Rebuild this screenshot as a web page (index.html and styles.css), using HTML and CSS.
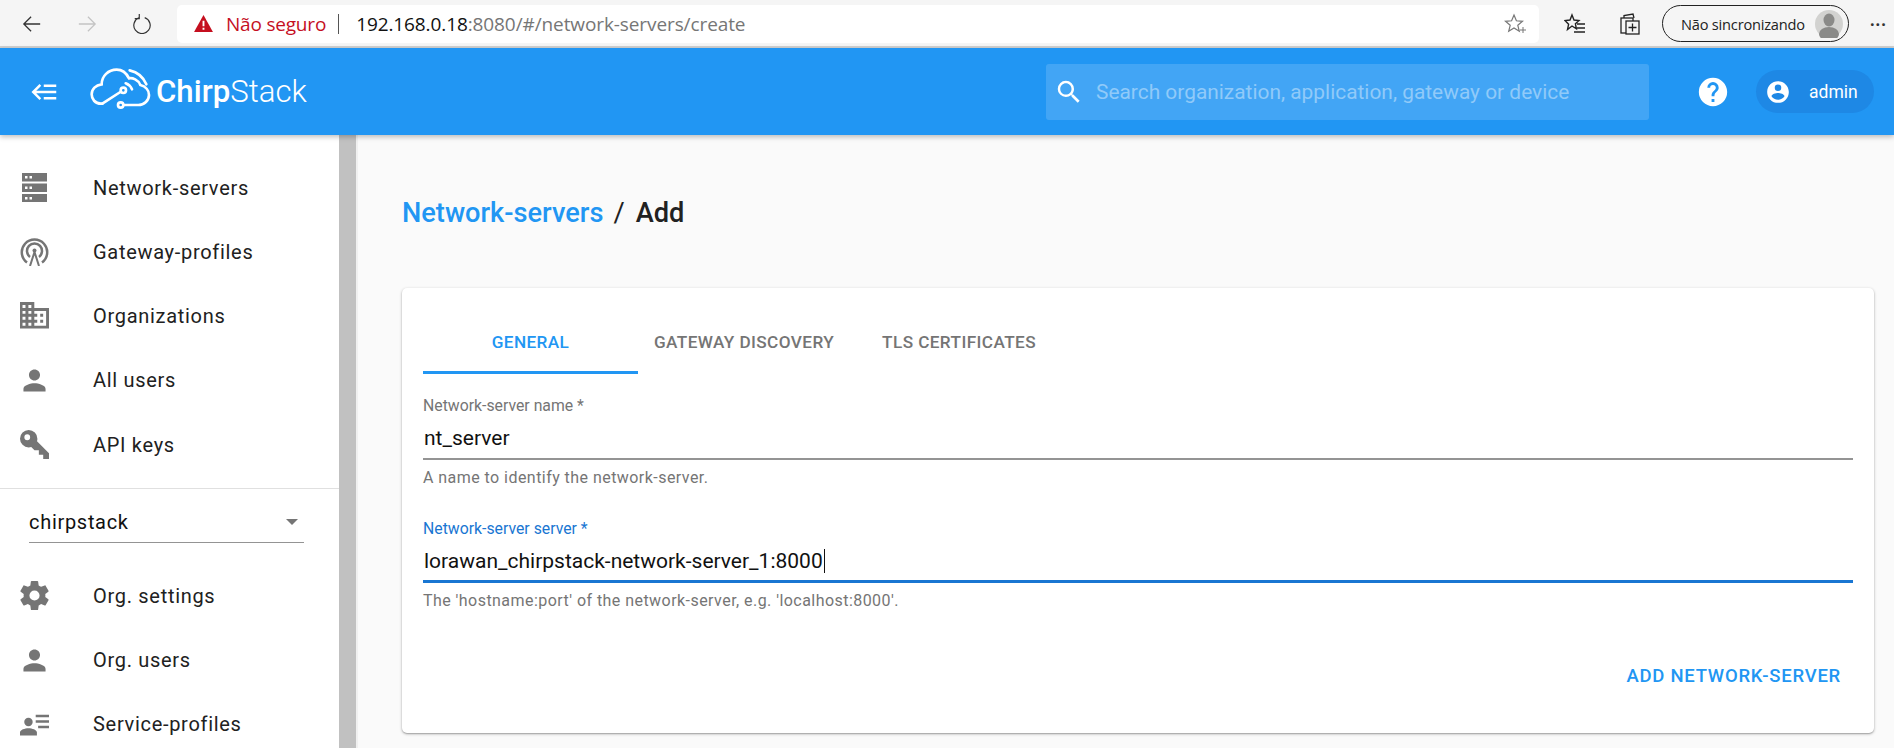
FILE: index.html
```html
<!DOCTYPE html>
<html>
  <head>
    <meta charset="utf-8">
    <title>ChirpStack</title>
    <link rel="stylesheet" href="styles.css">
  </head>
  <body>
    <div class="browser-bar">
      <div class="nav-btns">
        <svg class="nav-icon" viewBox="0 0 22 22"><path d="M20 11H2M10 3l-8 8 8 8" fill="none" stroke="#333" stroke-width="1.4"/></svg>
        <svg class="nav-icon" viewBox="0 0 22 22"><path d="M2 11h18M12 3l8 8-8 8" fill="none" stroke="#c4c4c4" stroke-width="1.4"/></svg>
        <svg class="nav-icon" viewBox="0 0 22 22"><path d="M8 4a9 9 0 1 0 6 0M8 0v5H3" fill="none" stroke="#333" stroke-width="1.3"/></svg>
      </div>
      <div class="address">
        <svg class="warn" viewBox="0 0 20 18"><path d="M10 0l10 18H0z" fill="#c50f1f"/><path d="M9 6h2v6H9zM9 13.5h2v2H9z" fill="#fff"/></svg>
        <span class="not-secure">Não seguro</span>
        <span class="addr-sep"></span>
        <span class="url"><b>192.168.0.18</b>:8080/#/network-servers/create</span>
        <svg class="addr-star" viewBox="0 0 22 22"><path d="M10 2l2.4 5.8 6.1.5-4.7 4 1.5 6L10 15l-5.3 3.3 1.5-6-4.7-4 6.1-.5z" fill="none" stroke="#777" stroke-width="1.2"/><path d="M16 17h6M19 14v6" stroke="#777" stroke-width="1"/></svg>
      </div>
      <svg class="tool-icon first" viewBox="0 0 22 22"><path d="M8 2l2 5 5 .5-3.6 3.300 1 5L8 13l-4.500 3.500 1.100-5.200L1 7.500 6 7z" fill="none" stroke="#222" stroke-width="1.400"/><path d="M13 11h8M13 15h8M10 19h11" stroke="#222" stroke-width="1.500"/></svg>
      <svg class="tool-icon" viewBox="0 0 22 22"><path d="M5 5V2.500L14 1l1 4" fill="none" stroke="#222" stroke-width="1.300"/><rect x="2" y="5" width="12" height="15" fill="none" stroke="#222" stroke-width="1.300"/><rect x="7" y="8" width="13" height="13" fill="#f5f5f5" stroke="#222" stroke-width="1.300"/><path d="M13.500 10.500v8M9.500 14.500h8" stroke="#222" stroke-width="1.300"/></svg>
      <div class="sync-pill">
        <span>Não sincronizando</span>
        <svg class="sync-avatar" viewBox="0 0 28 28"><circle cx="14" cy="14" r="14" fill="#d2d2d0"/><ellipse cx="14" cy="10" rx="5.500" ry="6.500" fill="#8a8a88"/><ellipse cx="14" cy="24" rx="10" ry="7" fill="#8a8a88"/></svg>
      </div>
      <span class="more">···</span>
    </div>

    <header class="topbar">
      <svg class="burger" viewBox="0 0 24 24"><path d="M5,13L9,17L7.6,18.42L1.18,12L7.6,5.58L9,7L5,11H21V13H5M21,6V8H11V6H21M21,16V18H11V16H21Z"/></svg>
      <div class="logo">
        <svg class="logo-mark" viewBox="0 0 210 165" fill="none" stroke="#fff" stroke-width="8" stroke-linecap="round">
          <path d="M52 128H48C30 128 20 114 20 100C20 84 32 72 50 70C50 45 70 26 95 26C112 26 124 36 132 52C142 50 160 56 166 72C182 76 192 88 192 102C192 118 178 132 160 132H118"/>
          <path d="M52 128L106 93"/>
          <circle cx="115" cy="88" r="8"/>
          <circle cx="107" cy="132" r="8"/>
          <path d="M122 67C130 70 137 76 141 85"/>
          <path d="M134 28C156 33 175 48 184 70"/>
        </svg>
        <span class="logo-text"><b>Chirp</b>Stack</span>
      </div>
      <div class="search">
        <svg class="search-icon" viewBox="0 0 24 24"><path d="M9.5,3A6.5,6.5 0 0,1 16,9.5C16,11.11 15.41,12.59 14.44,13.73L14.71,14H15.5L20.5,19L19,20.5L14,15.5V14.71L13.73,14.44C12.59,15.41 11.11,16 9.5,16A6.5,6.5 0 0,1 3,9.5A6.5,6.5 0 0,1 9.5,3M9.5,5C7,5 5,7 5,9.5C5,12 7,14 9.5,14C12,14 14,12 14,9.5C14,7 12,5 9.5,5Z"/></svg>
        <span>Search organization, application, gateway or device</span>
      </div>
      <svg class="help" viewBox="0 0 24 24"><path d="M15.07,11.25L14.17,12.17C13.45,12.89 13,13.5 13,15H11V14.5C11,13.39 11.45,12.39 12.17,11.67L13.41,10.41C13.78,10.05 14,9.55 14,9C14,7.89 13.1,7 12,7A2,2 0 0,0 10,9H8A4,4 0 0,1 12,5A4,4 0 0,1 16,9C16,9.88 15.64,10.67 15.07,11.25M13,19H11V17H13M12,2A10,10 0 0,0 2,12A10,10 0 0,0 12,22A10,10 0 0,0 22,12C22,6.47 17.5,2 12,2Z"/></svg>
      <div class="user">
        <svg class="user-icon" viewBox="0 0 24 24"><path d="M12,19.2C9.5,19.2 7.29,17.92 6,16C6.03,14 10,12.9 12,12.9C14,12.9 17.97,14 18,16C16.71,17.92 14.5,19.2 12,19.2M12,5A3,3 0 0,1 15,8A3,3 0 0,1 12,11A3,3 0 0,1 9,8A3,3 0 0,1 12,5M12,2A10,10 0 0,0 2,12A10,10 0 0,0 12,22A10,10 0 0,0 22,12C22,6.47 17.5,2 12,2Z"/></svg>
        <span>admin</span>
      </div>
    </header>

    <div class="layout">
      <nav class="sidebar">
        <a class="nav-item"><svg viewBox="0 0 29 29"><path fill-rule="evenodd" d="M2 0h25v8.500H2zM5 3v2.500h2.500V3zM9.500 3v2.500H12V3zM2 10.500h25V19H2zM5 13.500V16h2.500v-2.500zM9.500 13.500V16H12v-2.500zM2 21h25v8.500H2zM5 24v2.500h2.500V24zM9.500 24v2.500H12V24z"/></svg><span>Network-servers</span></a>
        <a class="nav-item"><svg class="gateway-icon" viewBox="0 0 29 29"><path d="M7 25.500A12.700 12.700 0 1 1 22 25.500M10 20A7.500 7.500 0 1 1 19 20"/><path d="M10 29l4.500-14 4.500 14" stroke-width="2"/><circle cx="14.500" cy="13.500" r="2" class="dot"/></svg><span>Gateway-profiles</span></a>
        <a class="nav-item"><svg viewBox="0 0 24 24"><path d="M12 7V3H2v18h20V7H12zM6 19H4v-2h2v2zm0-4H4v-2h2v2zm0-4H4V9h2v2zm0-4H4V5h2v2zm4 12H8v-2h2v2zm0-4H8v-2h2v2zm0-4H8V9h2v2zm0-4H8V5h2v2zm10 12h-8v-2h2v-2h-2v-2h2v-2h-2V9h8v10zm-2-8h-2v2h2v-2zm0 4h-2v2h2v-2z" transform="translate(-2.800 -3.600) scale(1.220)"/></svg><span>Organizations</span></a>
        <a class="nav-item"><svg viewBox="1.500 1.500 21 21"><path d="M12 12c2.210 0 4-1.790 4-4s-1.790-4-4-4-4 1.790-4 4 1.790 4 4 4zm0 2c-2.670 0-8 1.340-8 4v2h16v-2c0-2.660-5.330-4-8-4z"/></svg><span>All users</span></a>
        <a class="nav-item"><svg viewBox="0 0 24 24"><path d="M22,18V22H18V19H15V16H12L9.740,13.740C9.190,13.910 8.610,14 8,14A6,6 0 0,1 2,8A6,6 0 0,1 8,2A6,6 0 0,1 14,8C14,8.610 13.910,9.190 13.740,9.740L22,18M7,5A2,2 0 0,0 5,7A2,2 0 0,0 7,9A2,2 0 0,0 9,7A2,2 0 0,0 7,5Z" transform="translate(-2.400 -2.400) scale(1.200)"/></svg><span>API keys</span></a>
        <div class="org-select">
          <div class="org-field">
            <span>chirpstack</span>
            <span class="caret-down"></span>
          </div>
        </div>
        <a class="nav-item"><svg viewBox="0 0 24 24"><path d="M12,15.500A3.500,3.500 0 0,1 8.500,12A3.500,3.500 0 0,1 12,8.500A3.500,3.500 0 0,1 15.500,12A3.500,3.500 0 0,1 12,15.500M19.430,12.970C19.470,12.650 19.500,12.330 19.500,12C19.500,11.670 19.470,11.340 19.430,11L21.540,9.370C21.730,9.220 21.780,8.950 21.660,8.730L19.660,5.270C19.540,5.050 19.270,4.960 19.050,5.050L16.560,6.050C16.040,5.660 15.500,5.320 14.870,5.070L14.500,2.420C14.460,2.180 14.250,2 14,2H10C9.750,2 9.540,2.180 9.500,2.420L9.130,5.070C8.500,5.320 7.960,5.660 7.440,6.050L4.950,5.050C4.730,4.960 4.460,5.050 4.340,5.270L2.340,8.730C2.210,8.950 2.270,9.220 2.460,9.370L4.570,11C4.530,11.340 4.500,11.670 4.500,12C4.500,12.330 4.530,12.650 4.570,12.970L2.460,14.630C2.270,14.780 2.210,15.050 2.340,15.270L4.340,18.730C4.460,18.950 4.730,19.030 4.950,18.950L7.440,17.940C7.960,18.340 8.500,18.680 9.130,18.930L9.500,21.580C9.540,21.820 9.750,22 10,22H14C14.250,22 14.460,21.820 14.500,21.580L14.870,18.930C15.500,18.670 16.040,18.340 16.560,17.940L19.050,18.950C19.270,19.030 19.540,18.950 19.660,18.730L21.660,15.270C21.780,15.050 21.730,14.780 21.540,14.630L19.430,12.970Z" transform="translate(-2.400 -2.400) scale(1.200)"/></svg><span>Org. settings</span></a>
        <a class="nav-item"><svg viewBox="1.500 1.500 21 21"><path d="M12 12c2.210 0 4-1.790 4-4s-1.790-4-4-4-4 1.790-4 4 1.790 4 4 4zm0 2c-2.670 0-8 1.340-8 4v2h16v-2c0-2.660-5.330-4-8-4z"/></svg><span>Org. users</span></a>
        <a class="nav-item"><svg viewBox="0 0 24 24"><path d="M13 4h11v2H13zM13 8.500h11v2H13zM15 13h9v2h-9zM7 6.500a3.500 3.500 0 1 1 0 7 3.500 3.500 0 0 1 0-7zM7 15c3 0 7 1.300 7 3.500V21H0v-2.500C0 16.300 4 15 7 15z"/></svg><span>Service-profiles</span></a>
      </nav>
      <div class="scrollbar"></div>

      <main class="content">
        <h1 class="crumbs"><a>Network-servers</a><span class="crumb-sep">/</span><span>Add</span></h1>
        <div class="card">
          <div class="tabs">
            <div class="tab active">General</div>
            <div class="tab">Gateway discovery</div>
            <div class="tab">TLS certificates</div>
          </div>
          <div class="field">
            <label>Network-server name *</label>
            <div class="value">nt_server</div>
            <div class="help-text">A name to identify the network-server.</div>
          </div>
          <div class="field focused">
            <label>Network-server server *</label>
            <div class="value"><span class="typed">lorawan_chirpstack-network-server_1:8000</span></div>
            <div class="help-text">The 'hostname:port' of the network-server, e.g. 'localhost:8000'.</div>
          </div>
          <div class="actions">
            <a class="btn">Add network-server</a>
          </div>
        </div>
      </main>
    </div>
  </body>
</html>
```

FILE: styles.css
```css
* {
  box-sizing: border-box;
}
html, body {
  margin: 0;
  padding: 0;
  height: 100%;
  overflow: hidden;
}
body {
  font-family: Roboto, sans-serif;
  background: #fafafa;
  color: #212121;
  display: flex;
  flex-direction: column;
}

/* browser chrome */
.browser-bar {
  height: 48px;
  flex: none;
  display: flex;
  align-items: center;
  background: #f5f5f5;
  border-bottom: 2px solid #d0d0d0;
  padding-top: 1px;
  font-family: "Open Sans", sans-serif;
}
.nav-btns {
  width: 177px;
  flex: none;
  display: flex;
  padding-left: 22px;
  gap: 35px;
}
.nav-icon {
  width: 20px;
  height: 20px;
}
.address {
  width: 1362px;
  height: 38px;
  flex: none;
  background: #fff;
  border-radius: 5px;
  display: flex;
  align-items: center;
  padding-left: 17px;
}
.warn {
  width: 19px;
  height: 17px;
}
.not-secure {
  color: #c50f1f;
  margin-left: 13px;
  font-size: 19px;
  letter-spacing: -0.200px;
}
.addr-sep {
  width: 1px;
  height: 20px;
  background: #555;
  margin: 0 17px 0 12px;
}
.url {
  color: #767676;
  font-size: 19px;
  letter-spacing: -0.100px;
}
.url b {
  color: #111;
  font-weight: 400;
}
.addr-star {
  width: 22px;
  height: 22px;
  margin-left: auto;
  margin-right: 13px;
}
.tool-icon {
  width: 22px;
  height: 22px;
  margin-left: 33px;
}
.tool-icon.first {
  margin-left: 25px;
}
.sync-pill {
  width: 187px;
  height: 37px;
  margin-left: 21px;
  border: 1.500px solid #222;
  border-radius: 19px;
  display: flex;
  align-items: center;
  justify-content: space-between;
  padding: 0 5px 0 18px;
  font-size: 14.600px;
  letter-spacing: -0.200px;
  white-space: nowrap;
  color: #222;
}
.sync-avatar {
  width: 28px;
  height: 28px;
}
.more {
  margin-left: 21px;
  font-size: 16px;
  font-weight: 700;
  letter-spacing: 1px;
  color: #333;
}

/* app header */
.topbar {
  height: 87px;
  flex: none;
  display: flex;
  align-items: center;
  background: #2196f3;
  color: #fff;
  box-shadow: 0 2px 5px rgba(0, 0, 0, 0.25);
  position: relative;
  z-index: 2;
}
.burger {
  width: 30px;
  height: 30px;
  fill: #fff;
  margin-left: 30px;
}
.logo {
  width: 224px;
  display: flex;
  align-items: center;
  margin-left: 25px;
}
.logo-mark {
  width: 70px;
  height: 55px;
  margin-bottom: 7px;
}
.logo-text {
  font-size: 31.200px;
  font-weight: 300;
  margin-left: 1px;
}
.logo-text b {
  font-weight: 500;
}
.search {
  width: 603px;
  height: 56px;
  margin-left: 737px;
  background: #42a5f5;
  border-radius: 3px;
  display: flex;
  align-items: center;
  padding-left: 8px;
  color: #90caf9;
  font-size: 20.900px;
}
.search-icon {
  width: 30px;
  height: 30px;
  fill: #fff;
}
.search span {
  margin-left: 12px;
}
.help {
  width: 34px;
  height: 34px;
  fill: #fff;
  margin-left: 47px;
}
.user {
  width: 118px;
  height: 43px;
  margin-left: 26px;
  background: #1e88e5;
  border-radius: 22px;
  display: flex;
  align-items: center;
  padding-left: 9px;
  font-size: 17.500px;
}
.user-icon {
  width: 26px;
  height: 26px;
  fill: #fff;
}
.user span {
  margin-left: 18px;
}

/* body */
.layout {
  flex: 1;
  display: flex;
  min-height: 0;
}
.sidebar {
  width: 339px;
  flex: none;
  background: #fff;
  padding-top: 20.500px;
  overflow: hidden;
}
.nav-item {
  height: 64.250px;
  display: flex;
  align-items: center;
  padding-left: 20px;
  font-size: 20px;
  letter-spacing: 0.700px;
  color: #212121;
}
.nav-item svg {
  width: 29px;
  height: 29px;
  flex: none;
  fill: #757575;
}
.nav-item svg.gateway-icon {
  fill: none;
  stroke: #757575;
  stroke-width: 2.500;
}
.gateway-icon .dot {
  fill: #757575;
  stroke: none;
}
.nav-item span {
  margin-left: 44px;
}
.org-select {
  height: 75.500px;
  margin-top: 11.500px;
  border-top: 1px solid #e0e0e0;
  padding: 17px 35px 0 29px;
}
.org-field {
  height: 37px;
  border-bottom: 1px solid #949494;
  display: flex;
  align-items: center;
  justify-content: space-between;
  font-size: 20px;
  letter-spacing: 0.700px;
  padding: 0 6px 4px 0;
  color: #111;
}
.caret-down {
  width: 0;
  height: 0;
  border-left: 6px solid transparent;
  border-right: 6px solid transparent;
  border-top: 6px solid #757575;
}
.scrollbar {
  width: 19px;
  flex: none;
  background: #c1c1c1;
  border-right: 2px solid #f0f0f0;
}
.content {
  flex: 1;
  min-width: 0;
  padding: 0 20px 0 44px;
}
.crumbs {
  margin: 0;
  height: 153px;
  padding-top: 60px;
  font-size: 27.200px;
  line-height: 36px;
  font-weight: 500;
  color: #212121;
}
.crumbs a {
  color: #2196f3;
}
.crumb-sep {
  margin: 0 11px 0 10px;
  font-weight: 400;
}
.card {
  height: 445px;
  background: #fff;
  border-radius: 5px;
  box-shadow: 0 1px 3px rgba(0, 0, 0, 0.3), 0 1px 1px rgba(0, 0, 0, 0.14);
  padding: 0 21px;
}
.tabs {
  display: flex;
  height: 86px;
  padding-top: 20px;
  margin-bottom: 22px;
}
.tab {
  height: 66px;
  line-height: 68px;
  padding: 0 24px;
  font-size: 17.200px;
  font-weight: 500;
  letter-spacing: 0.400px;
  text-transform: uppercase;
  text-align: center;
  white-space: nowrap;
  color: #757575;
  border-bottom: 3px solid transparent;
}
.tab.active {
  width: 215px;
  color: #2196f3;
  border-bottom-color: #2196f3;
}
.tab.active + .tab {
  padding-left: 16px;
}
.field {
  height: 123px;
}
.field label {
  display: block;
  font-size: 15.800px;
  line-height: 20px;
  color: #757575;
}
.value {
  height: 44px;
  padding: 7px 1px 0;
  line-height: 30px;
  font-size: 21px;
  color: #111;
  border-bottom: 2px solid #949494;
}
.typed {
  border-right: 1px solid #111;
  padding-right: 1px;
}
.field.focused label {
  color: #1976d2;
}
.field.focused .value {
  border-bottom: 3px solid #1976d2;
}
.help-text {
  margin-top: 8px;
  font-size: 16px;
  letter-spacing: 0.450px;
  line-height: 20px;
  color: #757575;
}
.actions {
  display: flex;
  justify-content: flex-end;
  padding: 23px 12px 0 0;
}
.btn {
  font-size: 18.500px;
  font-weight: 500;
  letter-spacing: 0.750px;
  text-transform: uppercase;
  color: #2196f3;
}
```
